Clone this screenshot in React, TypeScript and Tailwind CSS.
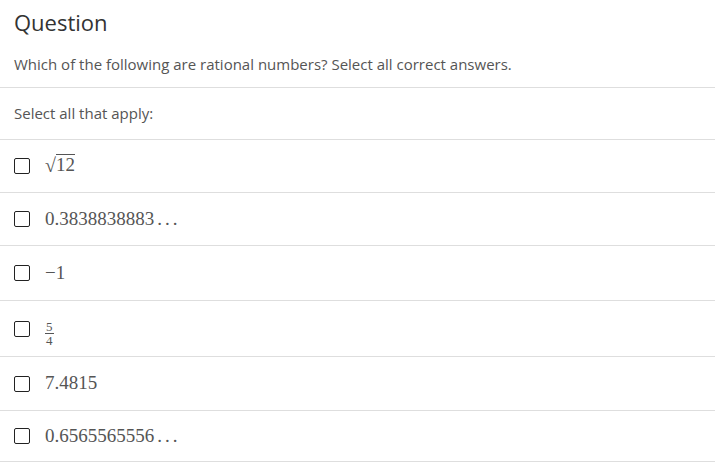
const options: { key: string; h: string; content: React.ReactNode }[] = [
  {
    key: "sqrt",
    h: "h-[53px]",
    content: (
      <span className="inline-flex items-start">
        <span className="text-[20px] leading-none mt-[1px]">√</span>
        <span className="border-t border-[#555] leading-[20px]">12</span>
      </span>
    ),
  },
  { key: "a", h: "h-[53px]", content: <span>0.3838838883<span className="tracking-[3px] ml-[3px]">...</span></span> },
  { key: "neg", h: "h-[55px]", content: <span>−1</span> },
  {
    key: "frac",
    h: "h-[56px]",
    content: (
      <span className="inline-flex flex-col items-center text-[13px] leading-[11px]">
        <span className="px-[1px]">5</span>
        <span className="h-px w-full bg-[#555] my-[1px]" />
        <span>4</span>
      </span>
    ),
  },
  { key: "b", h: "h-[54px]", content: <span>7.4815</span> },
  { key: "c", h: "h-[51px]", content: <span>0.6565565556<span className="tracking-[3px] ml-[3px]">...</span></span> },
]

export default function App() {
  return (
    <div className="w-[715px] h-[474px] bg-white font-['Open_Sans',sans-serif] text-[#555]">
      <div className="px-[14px] pt-[7px] pb-[13px] border-b border-[#dedede]">
        <h2 className="text-[22px] leading-[30px] text-[#333]">Question</h2>
        <p className="mt-[17px] text-[15px] leading-[20px]">
          Which of the following are rational numbers? Select all correct answers.
        </p>
      </div>
      <div className="px-[14px] h-[52px] flex items-center border-b border-[#dedede] text-[15px]">
        Select all that apply:
      </div>
      {options.map((o) => (
        <div
          key={o.key}
          className={`flex items-center gap-[15px] px-[14px] border-b border-[#dedede] ${o.h}`}
        >
          <span className="w-[16px] h-[16px] border-[1.5px] border-[#222] rounded-[2px] shrink-0" />
          <span className="font-['Liberation_Serif',serif] text-[19px] text-[#555]">{o.content}</span>
        </div>
      ))}
    </div>
  )
}
